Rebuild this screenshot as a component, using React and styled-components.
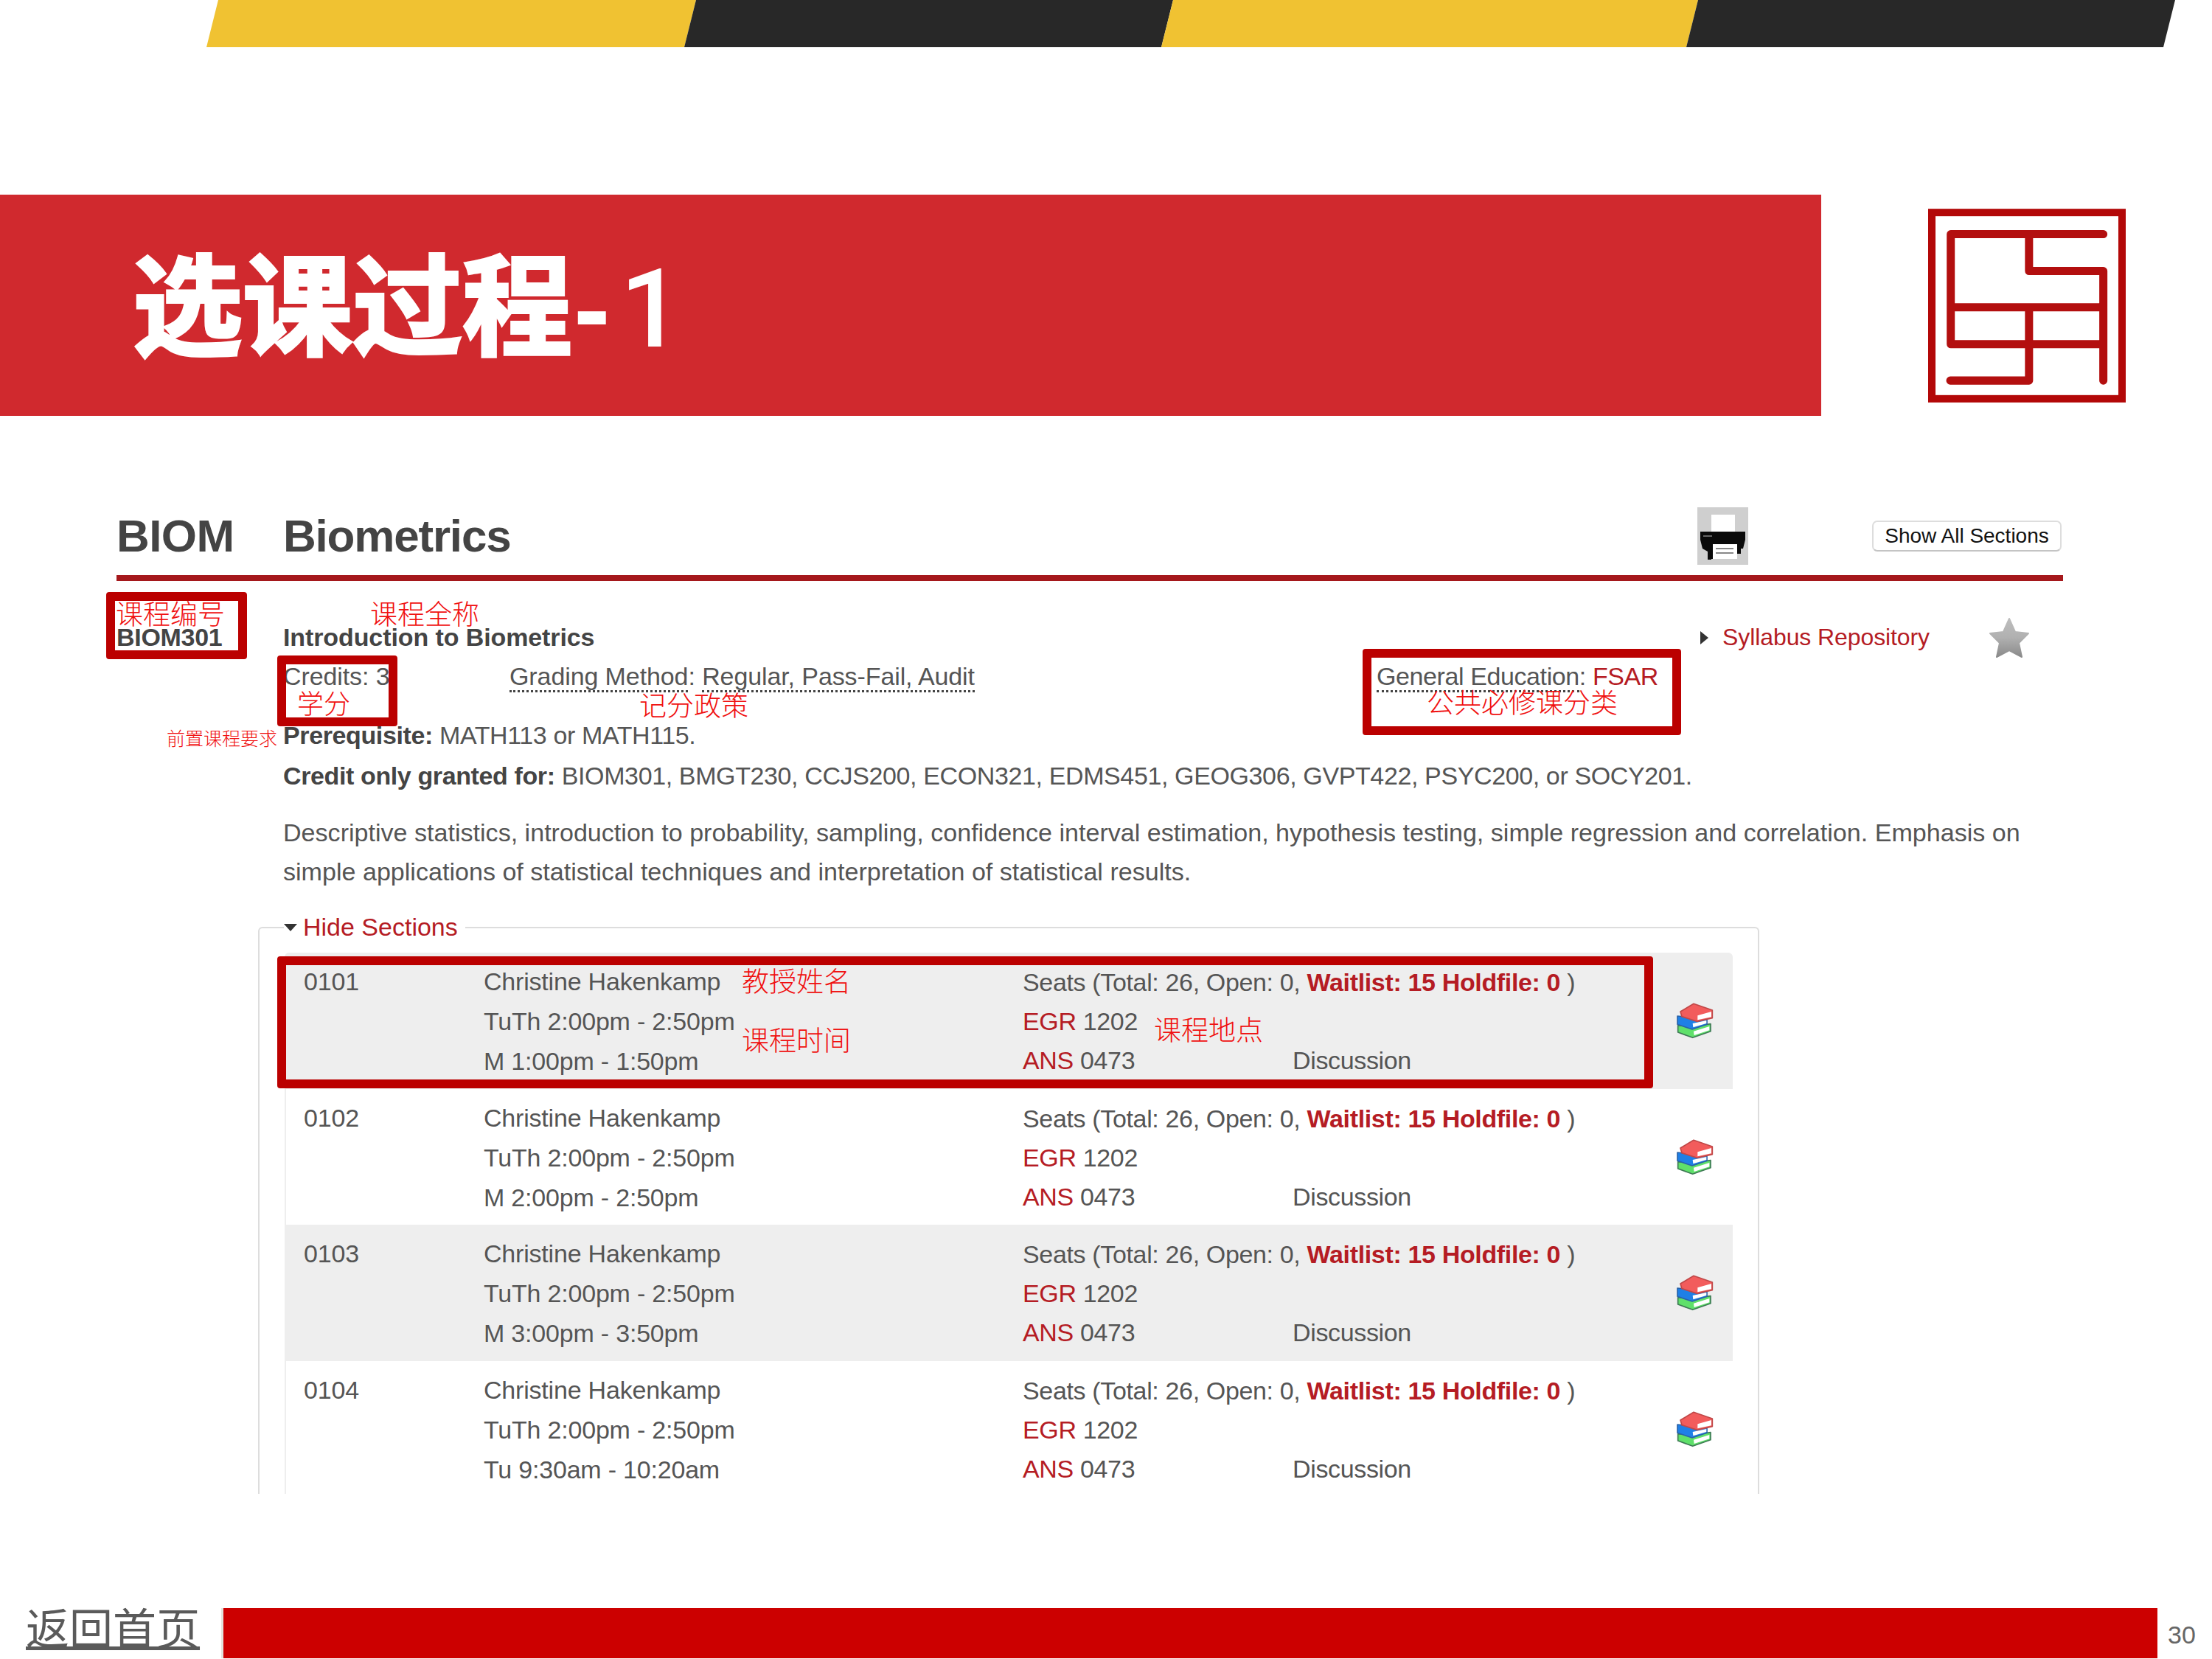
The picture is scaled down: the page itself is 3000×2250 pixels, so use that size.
import React from "react";
import styled, { createGlobalStyle } from "styled-components";

const GlobalStyle = createGlobalStyle`
  html, body {
    margin: 0;
    padding: 0;
    background: #fff;
  }
  * {
    box-sizing: border-box;
  }
`;

const latin = `"Liberation Sans", "Noto Sans CJK SC", sans-serif`;
const cjk = `"Noto Sans CJK SC", "Liberation Sans", sans-serif`;

const Slide = styled.div`
  position: relative;
  width: 3000px;
  height: 2250px;
  overflow: hidden;
  display: flex;
  flex-direction: column;
  font-family: ${latin};
  font-size: 34px;
  color: #555;
`;

const Stripes = styled.div`
  display: flex;
  height: 64px;
  padding-left: 280px;
`;

const Stripe = styled.div`
  width: ${p => p.$w}px;
  margin-right: -16px;
  background: ${p => p.$color};
  clip-path: polygon(16px 0, 100% 0, calc(100% - 16px) 100%, 0 100%);
`;

const TitleRow = styled.div`
  display: flex;
  align-items: flex-start;
  margin-top: 200px;
  height: 300px;
`;

const TitleBar = styled.div`
  width: 2470px;
  height: 300px;
  background: #d0292e;
  display: flex;
  align-items: center;
  padding: 0 0 4px 180px;
`;

const Title = styled.h1`
  margin: 0;
  font-family: ${cjk};
  font-size: 149px;
  font-weight: 700;
  color: #fff;
  -webkit-text-stroke: 4px #fff;
  line-height: 1;
`;

const TitleDash = styled.span`
  font-family: ${latin};
  margin-left: 2px;
  -webkit-text-stroke: 0;
`;

const TitleNum = styled.span`
  font-family: Roboto, ${latin};
  font-weight: 500;
  margin-left: 13px;
  -webkit-text-stroke: 0;
`;

const Logo = styled.svg`
  width: 268px;
  height: 263px;
  margin: 19px 0 0 145px;
  flex: none;
`;

const Course = styled.div`
  margin: 124px 202px 0 158px;
`;

const CourseHeader = styled.div`
  display: flex;
  align-items: center;
  height: 100px;
  border-bottom: 8px solid #a5181c;
`;

const Dept = styled.div`
  width: 226px;
  font-size: 62px;
  font-weight: 700;
  letter-spacing: -0.6px;
  color: #444;
  margin-top: -16px;
`;

const DeptName = styled(Dept)`
  width: 1918px;
  letter-spacing: -1.2px;
`;

const PrintButton = styled.div`
  width: 69px;
  height: 78px;
  background: #cfcfcf;
  margin-top: -14px;
`;

const PrinterIcon = styled.svg`
  display: block;
  width: 69px;
  height: 78px;
`;

const ShowAll = styled.button`
  margin-left: 168px;
  width: 257px;
  height: 42px;
  padding: 0;
  font: 28px ${latin};
  color: #111;
  background: #fff;
  border: 2px solid #ddd;
  border-bottom-color: #c4c4c4;
  border-radius: 7px;
  margin-top: -14px;
`;

const CourseBody = styled.div`
  display: grid;
  grid-template-columns: 226px 1fr;
  padding-top: 50px;
`;

const CourseId = styled.div`
  font-weight: 700;
  line-height: 53px;
  letter-spacing: -0.3px;
  color: #444;
`;

const Details = styled.div`
  line-height: 53px;
`;

const TitleLine = styled.div`
  display: flex;
  align-items: center;
  height: 53px;
  font-weight: 700;
  letter-spacing: -0.1px;
  color: #444;
`;

const Syllabus = styled.div`
  display: flex;
  align-items: center;
  font-size: 32px;
  font-weight: 400;
  color: #b51c24;
  margin-left: auto;
  gap: 19px;
`;

const Caret = styled.span`
  width: 0;
  height: 0;
  border-top: 9px solid transparent;
  border-bottom: 9px solid transparent;
  border-left: 11px solid #333;
`;

const Star = styled.svg`
  width: 58px;
  height: 58px;
  margin: 0 44px 0 79px;
  flex: none;
`;

const MetaLine = styled.div`
  display: flex;
  height: 53px;
  letter-spacing: -0.1px;
`;

const Credits = styled.div`
  width: 307px;
`;

const Grading = styled.div`
  width: 1176px;
`;

const GenEd = styled.div`
  letter-spacing: -0.4px;
`;

const Dotted = styled.span`
  border-bottom: 3px dotted #444;
`;

const Red = styled.span`
  color: #b51c24;
`;

const Bold = styled.b`
  font-weight: 700;
  color: #444;
`;

const InfoLine = styled.div`
  height: 53px;
  margin-top: ${p => p.$top || 0}px;
  letter-spacing: -0.38px;
`;

const Description = styled.p`
  margin: 24px 0 22px;
  font-size: 34.08px;
  line-height: 53px;
  width: 2400px;
`;

const SectionBox = styled.fieldset`
  width: 2036px;
  height: 795px;
  margin: 0 0 0 192px;
  padding: 8px 34px 0 34px;
  border: 2px solid #ddd;
  border-bottom: none;
  border-radius: 6px 6px 0 0;
  overflow: hidden;
`;

const SectionLegend = styled.legend`
  margin-left: -1px;
  padding: 0 10px 0 0;
  line-height: 53px;
  color: #b51c24;
  display: flex;
  align-items: center;
  gap: 8px;
`;

const CaretDown = styled.span`
  width: 0;
  height: 0;
  border-left: 9px solid transparent;
  border-right: 9px solid transparent;
  border-top: 10px solid #333;
`;

const Row = styled.div`
  display: grid;
  grid-template-columns: 244px 731px 878px 70px;
  height: 184.5px;
  padding: 12px 0 0 24px;
  background: ${p => (p.$shaded ? "#eeeeee" : "#fff")};
  border-left: 2px solid #eee;
  line-height: 54px;
  letter-spacing: -0.2px;

  &:first-of-type {
    border-radius: 6px 6px 0 0;
  }
`;

const Cell = styled.div`
  display: flex;
  flex-direction: column;
`;

const SeatCell = styled(Cell)`
  padding-top: 2px;
  line-height: 53px;
  letter-spacing: -0.35px;
`;

const Room = styled.div`
  display: grid;
  grid-template-columns: 366px 1fr;
`;

const Books = styled.svg`
  width: 70px;
  height: 66px;
  margin-top: 46px;
  filter: blur(0.5px);
`;

const Footer = styled.div`
  margin-top: auto;
  height: 69px;
  display: flex;
`;

const HomeLink = styled.a`
  width: 303px;
  padding-left: 35px;
  font: 59px/50px ${cjk};
  color: #5a5a5a;
  text-decoration: underline;
  text-decoration-thickness: 5px;
  text-underline-offset: 2px;
`;

const FooterBar = styled.div`
  width: 2623px;
  height: 68px;
  background: #cc0000;
  box-shadow: -3px 0 0 #e4e4de;
`;

const PageNo = styled.div`
  margin-left: 14px;
  font: 300 34px/72px ${latin};
  color: #666;
`;

// red markup that was drawn on top of the screenshot
const MarkBox = styled.div`
  position: absolute;
  left: ${p => p.$x}px;
  top: ${p => p.$y}px;
  width: ${p => p.$w}px;
  height: ${p => p.$h}px;
  border: 12px solid #bb0000;
  border-radius: 4px;
`;

const Note = styled.div`
  position: absolute;
  left: ${p => p.$x}px;
  top: ${p => p.$y}px;
  font: 300 ${p => p.$size || 37}px/1 ${cjk};
  color: #f01010;
  white-space: nowrap;
`;

const sections = [
  { id: "0101", last: "M 1:00pm - 1:50pm" },
  { id: "0102", last: "M 2:00pm - 2:50pm" },
  { id: "0103", last: "M 3:00pm - 3:50pm" },
  { id: "0104", last: "Tu 9:30am - 10:20am" }
];

const BooksIcon = () => (
  <Books viewBox="0 0 210 198">
    <path d="M32 122 L92 126 L165 116 L165 146 L92 172 L32 150 Z" fill="#5fe06a" stroke="#3f7a55" strokeWidth="5" strokeLinejoin="round" />
    <path d="M96 146 L160 126 L160 142 L98 162 Z" fill="#fff" />
    <path d="M30 84 L90 90 L150 96 L150 118 L90 138 L30 118 Z" fill="#1f7fe6" stroke="#2a63a8" strokeWidth="5" strokeLinejoin="round" />
    <path d="M92 114 L148 102 L148 114 L94 130 Z" fill="#fff" />
    <path d="M42 66 L96 34 L172 60 L172 92 L110 106 L48 86 Z" fill="#f25c5c" stroke="#c04848" strokeWidth="5" strokeLinejoin="round" />
    <path d="M112 82 L168 66 L168 88 L112 100 Z" fill="#fff" />
  </Books>
);

const SectionRow = ({ id, last, shaded }) => (
  <Row $shaded={shaded}>
    <Cell>{id}</Cell>
    <Cell>
      <span>Christine Hakenkamp</span>
      <span>TuTh 2:00pm - 2:50pm</span>
      <span>{last}</span>
    </Cell>
    <SeatCell>
      <span>
        Seats (Total: 26, Open: 0, <Red as="b">Waitlist: 15 Holdfile: 0</Red> )
      </span>
      <span>
        <Red>EGR</Red> 1202
      </span>
      <Room>
        <span>
          <Red>ANS</Red> 0473
        </span>
        <span>Discussion</span>
      </Room>
    </SeatCell>
    <BooksIcon />
  </Row>
);

export default function App() {
  return (
    <>
      <GlobalStyle />
      <Slide>
        <Stripes>
          <Stripe $w={664} $color="#f0c232" />
          <Stripe $w={663} $color="#282828" />
          <Stripe $w={728} $color="#f0c232" />
          <Stripe $w={663} $color="#282828" />
        </Stripes>

        <TitleRow>
          <TitleBar>
            <Title>
              选课过程<TitleDash>-</TitleDash>
              <TitleNum>1</TitleNum>
            </Title>
          </TitleBar>
          <Logo viewBox="345 130 803 787">
            <rect x="360" y="145" width="773" height="757" fill="none" stroke="#b30808" strokeWidth="30" />
            <path
              d="M1057 233 H437 V680 H1057 M755 233 V383 H1057 V828 M437 530 H1057 M755 530 V828 H435"
              fill="none"
              stroke="#b30f0f"
              strokeWidth="33"
              strokeLinecap="round"
              strokeLinejoin="round"
            />
          </Logo>
        </TitleRow>

        <Course>
          <CourseHeader>
            <Dept>BIOM</Dept>
            <DeptName>Biometrics</DeptName>
            <PrintButton>
              <PrinterIcon viewBox="0 0 69 78">
                <rect x="19" y="10" width="32" height="23" fill="#fff" />
                <path d="M4 33 H65 V44 L62 56 H59 V63 H54 V70 H19 V71 H14 V60 L7 56 L4 44 Z" fill="#0a0a0a" />
                <rect x="8" y="38" width="12" height="2" fill="#666" />
                <rect x="21" y="50" width="33" height="20" fill="#fff" />
                <rect x="25" y="55" width="24" height="2" fill="#888" />
                <rect x="25" y="61" width="24" height="2" fill="#888" />
              </PrinterIcon>
            </PrintButton>
            <ShowAll>Show All Sections</ShowAll>
          </CourseHeader>
          <CourseBody>
            <CourseId>BIOM301</CourseId>
            <Details>
              <TitleLine>
                Introduction to Biometrics
                <Syllabus>
                  <Caret />
                  Syllabus Repository
                </Syllabus>
                <Star viewBox="0 0 58 58">
                  <defs>
                    <linearGradient id="starFill" x1="0" y1="0" x2="0" y2="1">
                      <stop offset="0" stopColor="#bdbdbd" />
                      <stop offset="0.5" stopColor="#b0b0b0" />
                      <stop offset="1" stopColor="#8a8a8a" />
                    </linearGradient>
                  </defs>
                  <path
                    d="M29 3 L37 21 L55 23 L42 36 L46 55 L29 46 L12 55 L16 36 L3 23 L21 21 Z"
                    fill="url(#starFill)"
                    stroke="url(#starFill)"
                    strokeWidth="2"
                    strokeLinejoin="round"
                  />
                </Star>
              </TitleLine>
              <MetaLine>
                <Credits>Credits: 3</Credits>
                <Grading>
                  <Dotted>Grading Method</Dotted>: <Dotted>Regular, Pass-Fail, Audit</Dotted>
                </Grading>
                <GenEd>
                  <Dotted>General Education</Dotted>: <Red>FSAR</Red>
                </GenEd>
              </MetaLine>
              <InfoLine $top={27}>
                <Bold>Prerequisite:</Bold> MATH113 or MATH115.
              </InfoLine>
              <InfoLine $top={2}>
                <Bold>Credit only granted for:</Bold> BIOM301, BMGT230, CCJS200, ECON321, EDMS451, GEOG306, GVPT422, PSYC200, or SOCY201.
              </InfoLine>
              <Description>
                Descriptive statistics, introduction to probability, sampling, confidence interval estimation, hypothesis testing, simple regression and correlation. Emphasis on simple applications of statistical techniques and interpretation of statistical results.
              </Description>
            </Details>
          </CourseBody>
          <SectionBox>
            <SectionLegend>
              <CaretDown />
              Hide Sections
            </SectionLegend>
            {sections.map((s, i) => (
              <SectionRow key={s.id} id={s.id} last={s.last} shaded={i % 2 === 0} />
            ))}
          </SectionBox>
        </Course>

        <Footer>
          <HomeLink>返回首页</HomeLink>
          <FooterBar />
          <PageNo>30</PageNo>
        </Footer>

        <MarkBox $x={144} $y={803} $w={191} $h={91} />
        <MarkBox $x={376} $y={889} $w={163} $h={96} />
        <MarkBox $x={1848} $y={880} $w={432} $h={117} />
        <MarkBox $x={376} $y={1297} $w={1866} $h={179} />

        <Note $x={157} $y={813}>课程编号</Note>
        <Note $x={502} $y={813}>课程全称</Note>
        <Note $x={403} $y={934} $size={36}>学分</Note>
        <Note $x={867} $y={937}>记分政策</Note>
        <Note $x={226} $y={988} $size={25}>前置课程要求</Note>
        <Note $x={1935} $y={933}>公共必修课分类</Note>
        <Note $x={1006} $y={1311}>教授姓名</Note>
        <Note $x={1006} $y={1391}>课程时间</Note>
        <Note $x={1565} $y={1377}>课程地点</Note>
      </Slide>
    </>
  );
}
